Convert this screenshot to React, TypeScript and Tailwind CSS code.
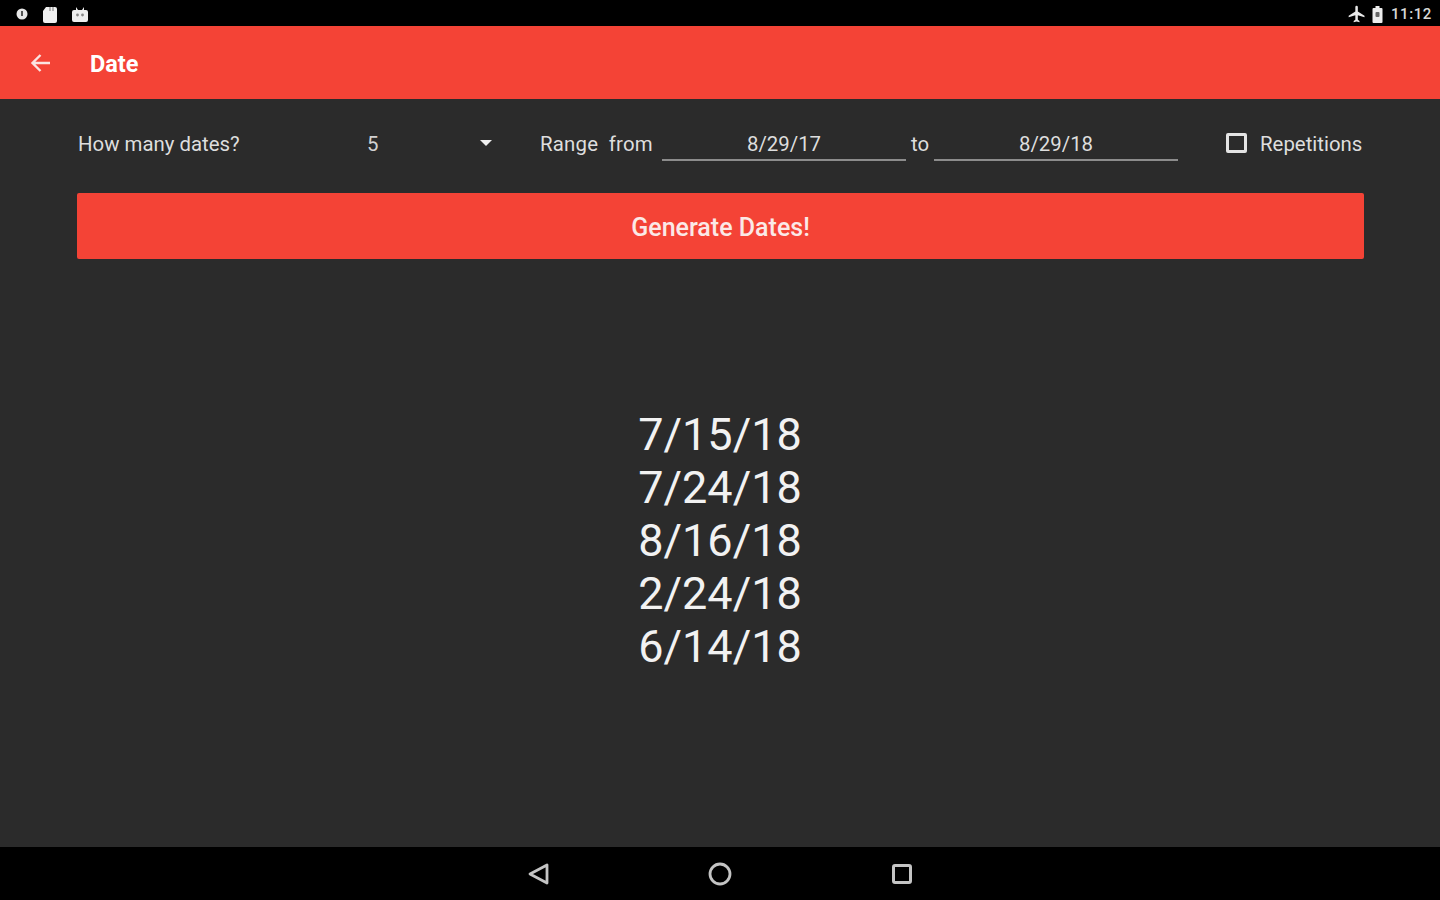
const dates = ["7/15/18", "7/24/18", "8/16/18", "2/24/18", "6/14/18"];

function StatusBar() {
  return (
    <div className="flex h-[26px] shrink-0 items-center justify-between bg-black pl-[16px] pr-[8px] pt-[2px] text-white">
      <div className="flex items-center gap-[14px]">
        <svg width="12" height="12" viewBox="0 0 12 12" aria-hidden="true">
          <circle cx="6" cy="6" r="5.5" fill="#e8e8e8" />
          <path d="M6 3v5" stroke="#555" strokeWidth="2" />
        </svg>
        <svg width="16" height="17" viewBox="0 0 16 17" aria-hidden="true">
          <path d="M4 1h9a2 2 0 0 1 2 2v12a2 2 0 0 1-2 2H3a2 2 0 0 1-2-2V5z" fill="#f0f0f0" />
          <path d="M8 1v4M11 1v4" stroke="#777" strokeWidth="1" />
        </svg>
        <svg width="16" height="15" viewBox="0 0 16 15" aria-hidden="true">
          <path d="M4 0l2 3h4l2-3v3h2a2 2 0 0 1 2 2v8a2 2 0 0 1-2 2H2a2 2 0 0 1-2-2V5a2 2 0 0 1 2-2h2z" fill="#efefef" />
          <circle cx="5.5" cy="8" r="1.4" fill="#888" />
          <circle cx="10.5" cy="8" r="1.4" fill="#888" />
        </svg>
      </div>
      <div className="flex items-center">
        <svg width="20" height="20" viewBox="0 0 24 24" fill="#e8e8e8" aria-hidden="true" className="mr-[4px]">
          <path d="M21 16v-2l-8-5V3.5a1.5 1.5 0 0 0-3 0V9l-8 5v2l8-2.5V19l-2 1.5V22l3.5-1 3.500 1v-1.5L13 19v-5.500z" />
        </svg>
        <svg width="13" height="17" viewBox="0 0 12 17" aria-hidden="true" className="mr-[7px]">
          <path d="M4 0h4v2h2a1 1 0 0 1 1 1v13a1 1 0 0 1-1 1H2a1 1 0 0 1-1-1V3a1 1 0 0 1 1-1h2z" fill="#ececec" />
          <rect x="4" y="6" width="4" height="5" rx="1" fill="#666" />
        </svg>
        <span className="text-[15px] font-medium leading-none tracking-[0.6px] text-[#d8d8d8]">11:12</span>
      </div>
    </div>
  );
}

function Toolbar() {
  return (
    <div className="flex h-[73px] shrink-0 items-center bg-[#f44336] pl-[29px] pt-[3px] text-white">
      <svg width="24" height="24" viewBox="0 0 24 24" fill="none" stroke="#fbe4e1" strokeWidth="2.4" aria-hidden="true">
        <path d="M21 11H4M11.500 3l-8 8 8 8" />
      </svg>
      <span className="ml-[37px] pt-[2px] text-[23.5px] font-bold leading-none">Date</span>
    </div>
  );
}

function DateField({ value }: { value: string }) {
  return (
    <div className="flex h-[34px] w-[244px] shrink-0 items-center justify-center border-b-2 border-[#8c8c8c] pt-[2px] text-[20.4px] text-[#dedede]">
      {value}
    </div>
  );
}

function Controls() {
  return (
    <div className="flex h-[34px] items-center text-[20.4px] leading-none text-[#dedede]">
      <span className="ml-[1px] w-[289px] shrink-0">How many dates?</span>
      <span className="w-[113px] shrink-0 text-[#d2d2d2]">5</span>
      <span className="mb-[2px] h-0 w-0 shrink-0 border-x-[6px] border-t-[6px] border-x-transparent border-t-[#efefef]" />
      <span className="ml-[48px] w-[122px] shrink-0 whitespace-pre tracking-[0.2px]">{"Range  from"}</span>
      <DateField value="8/29/17" />
      <span className="ml-[5px] w-[23px] shrink-0">to</span>
      <DateField value="8/29/18" />
      <span className="mb-[2px] ml-[48px] h-[20px] w-[21px] shrink-0 rounded-[2px] border-[3px] border-[#e4e4e4]" />
      <span className="ml-[13px] shrink-0">Repetitions</span>
    </div>
  );
}

export default function App() {
  return (
    <div className="flex h-[900px] w-[1440px] flex-col overflow-hidden bg-[#2b2b2b] font-['Roboto',sans-serif]">
      <StatusBar />
      <Toolbar />
      <main className="flex flex-1 flex-col px-[77px] pt-[28px]">
        <Controls />
        <button className="mt-[32px] flex h-[66px] w-[1287px] shrink-0 items-center justify-center rounded-[2px] bg-[#f44336] pt-[3px] text-[25px] font-medium text-[#fbe9e7]">
          Generate Dates!
        </button>
        <div className="mt-[149px] flex flex-col items-center text-[45px] leading-[53px] text-[#f2f2f2]">
          {dates.map((d, i) => (
            <div key={i}>{d}</div>
          ))}
        </div>
      </main>
      <nav className="flex h-[53px] shrink-0 items-center justify-center gap-[159px] bg-black">
        <svg width="22" height="22" viewBox="0 0 22 22" fill="none" stroke="#c4c4c4" strokeWidth="2.800" strokeLinejoin="round" aria-hidden="true">
          <path d="M20 2v18L3 11z" />
        </svg>
        <svg width="24" height="24" viewBox="0 0 24 24" fill="none" stroke="#c4c4c4" strokeWidth="2.800" aria-hidden="true">
          <circle cx="12" cy="12" r="10" />
        </svg>
        <svg width="22" height="22" viewBox="0 0 22 22" fill="none" stroke="#c4c4c4" strokeWidth="3" aria-hidden="true">
          <rect x="2.500" y="2.500" width="17" height="17" rx="1.500" />
        </svg>
      </nav>
    </div>
  );
}
